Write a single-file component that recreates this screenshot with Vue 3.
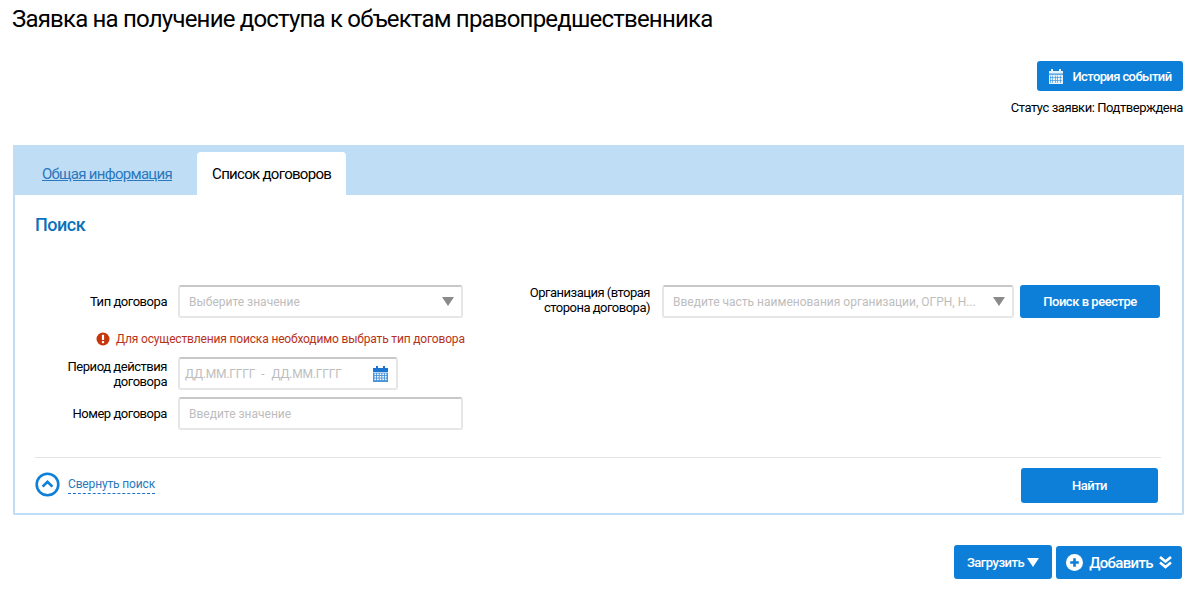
<script setup>
const calCells = [0, 1, 2, 3, 4]
</script>

<template>
  <div class="page">
    <h1 class="title">Заявка на получение доступа к объектам правопредшественника</h1>
    <div class="top-actions">
      <button class="btn history">
        <svg class="cal-white" width="14" height="15" viewBox="0 0 14 15">
          <path fill="#e8f2fb" d="M0 2h2V0h2v2h6V0h2v2h2v13H0z" />
          <g fill="#0d7fd8">
            <rect y="4.6" width="14" height="1" />
            <rect v-for="c in calCells" :key="c" :x="1 + c * 2.5" y="6.5" width="0.5" height="7.5" />
            <rect x="1" y="8.5" width="12" height="0.5" />
            <rect x="1" y="11" width="12" height="0.5" />
          </g>
        </svg>
        <span>История событий</span>
      </button>
      <div class="status">Статус заявки: Подтверждена</div>
    </div>

    <section class="panel">
      <div class="tabs">
        <a class="tab link">Общая информация</a>
        <a class="tab active">Список договоров</a>
      </div>
      <div class="body">
        <h2 class="heading">Поиск</h2>
        <div class="form">
          <div class="col-left">
            <div class="row">
              <label class="lbl">Тип договора</label>
              <div class="field wide">
                <span class="ph">Выберите значение</span>
                <i class="tri"></i>
              </div>
            </div>
            <div class="error">
              <svg width="14" height="14" viewBox="0 0 14 14">
                <circle cx="7" cy="7" r="6.5" fill="#c5360b" />
                <rect x="5.9" y="2.8" width="2.2" height="5.2" rx="0.6" fill="#fff" />
                <rect x="5.9" y="9" width="2.2" height="2.2" rx="0.6" fill="#fff" />
              </svg>
              <span>Для осуществления поиска необходимо выбрать тип договора</span>
            </div>
            <div class="row period-row">
              <label class="lbl">Период действия<br />договора</label>
              <div class="field period">
                <span class="ph date">ДД.ММ.ГГГГ</span>
                <span class="ph dash">-</span>
                <span class="ph date">ДД.ММ.ГГГГ</span>
                <svg class="cal-blue" width="15" height="16" viewBox="0 0 15 16">
                  <path fill="#1b74cf" d="M0 2h3V0h2v2h5V0h2v2h3v4H0z" />
                  <rect y="6.6" width="15" height="9.4" fill="#4a94dc" />
                  <g fill="#fff">
                    <rect v-for="c in calCells" :key="c" :x="1.5 + c * 2.6" y="7.5" width="1.6" height="1.6" />
                    <rect v-for="c in calCells" :key="'b' + c" :x="1.5 + c * 2.6" y="10" width="1.6" height="1.6" />
                    <rect v-for="c in calCells" :key="'d' + c" :x="1.5 + c * 2.6" y="12.5" width="1.6" height="1.6" />
                  </g>
                </svg>
              </div>
            </div>
            <div class="row number-row">
              <label class="lbl">Номер договора</label>
              <div class="field wide">
                <span class="ph">Введите значение</span>
              </div>
            </div>
          </div>
          <div class="col-right">
            <label class="lbl org-lbl">Организация (вторая<br />сторона договора)</label>
            <div class="field org">
              <span class="ph org-ph">Введите часть наименования организации, ОГРН, Н...</span>
              <i class="tri"></i>
            </div>
            <button class="btn registry">Поиск в реестре</button>
          </div>
        </div>
        <div class="foot">
          <a class="collapse">
            <svg width="25" height="25" viewBox="0 0 25 25">
              <circle cx="12.5" cy="12.5" r="10.8" fill="none" stroke="#0d7fd8" stroke-width="2.6" />
              <path d="M7.6 14.6l4.9-4.7 4.9 4.7" fill="none" stroke="#0d7fd8" stroke-width="2.6" />
            </svg>
            <span>Свернуть поиск</span>
          </a>
          <button class="btn find">Найти</button>
        </div>
      </div>
    </section>

    <div class="bottom-actions">
      <button class="btn upload">
        <span>Загрузить</span>
        <i class="tri white"></i>
      </button>
      <button class="btn add">
        <svg width="17" height="17" viewBox="0 0 17 17">
          <circle cx="8.5" cy="8.5" r="8.5" fill="#fff" />
          <path d="M7.2 4.2h2.6v3h3v2.6h-3v3H7.2v-3h-3V7.2h3z" fill="#0d7fd8" />
        </svg>
        <span>Добавить</span>
        <svg width="13" height="13" viewBox="0 0 13 13">
          <path d="M1 1l5.5 4.5L12 1M1 6.5l5.5 4.5L12 6.5" fill="none" stroke="#fff" stroke-width="2.6" />
        </svg>
      </button>
    </div>
  </div>
</template>

<style scoped>
.page {
  width: 1193px;
  height: 592px;
  box-sizing: border-box;
  padding: 3px 10px 0 13px;
  font-family: Roboto, "Liberation Sans", sans-serif;
  color: #000;
  overflow: hidden;
}
.title {
  margin: 0;
  font-size: 24px;
  line-height: 32px;
  font-weight: 400;
  margin-left: -1px;
  letter-spacing: -0.8px;
}
.top-actions {
  margin-top: 26px;
  display: flex;
  flex-direction: column;
  align-items: flex-end;
}
.btn {
  border: 0;
  border-radius: 3px;
  background: #0d7fd8;
  color: #fff;
  font-family: inherit;
  font-weight: 500;
  padding: 0;
  display: flex;
  align-items: center;
  justify-content: center;
}
.history {
  width: 146px;
  height: 30px;
  font-size: 13px;
  gap: 10px;
  letter-spacing: -0.6px;
}
.status {
  margin-top: 8px;
  font-size: 13px;
  line-height: 18px;
  letter-spacing: -0.44px;
}
.panel {
  margin-top: 28px;
  width: 1171px;
  box-sizing: border-box;
  border: 2px solid #c0ddf6;
  border-top: 0;
  border-radius: 2px;
}
.tabs {
  height: 50px;
  background: #c0ddf6;
  margin: 0 -2px;
  padding: 7px 0 0 14px;
  box-sizing: border-box;
  display: flex;
}
.tab {
  padding: 0 15px;
  font-size: 15px;
  line-height: 44px;
  letter-spacing: -0.7px;
  white-space: nowrap;
}
.link {
  color: #2a78bd;
  text-decoration: underline;
  padding-right: 25px;
}
.active {
  background: #fff;
  border-radius: 4px 4px 0 0;
}
.body {
  padding: 18px 21px 10px 20px;
}
.heading {
  margin: 0;
  font-size: 18px;
  line-height: 24px;
  font-weight: 500;
  color: #0a72ba;
  letter-spacing: -0.5px;
}
.form {
  margin-top: 48px;
  display: flex;
  height: 144px;
}
.col-left {
  width: 450px;
}
.row {
  display: flex;
  align-items: center;
}
.lbl {
  width: 132px;
  text-align: right;
  font-size: 13px;
  line-height: 15px;
  flex: none;
  letter-spacing: -0.46px;
}
.field {
  margin-left: 11px;
  box-sizing: border-box;
  background: #fff;
  border: 2px solid #e6e6e6;
  border-top-color: #c8c8c8;
  border-radius: 3px;
  display: flex;
  align-items: center;
  position: relative;
  height: 33px;
}
.wide {
  width: 285px;
  padding: 0 9px;
}
.ph {
  color: #bdbdbd;
  font-size: 12px;
}
.tri {
  width: 0;
  height: 0;
  border-left: 6.5px solid transparent;
  border-right: 6.5px solid transparent;
  border-top: 9px solid #8a8a8a;
  margin-left: auto;
  margin-right: -2px;
  flex: none;
}
.error {
  margin: 12px 0 0 61px;
  height: 17px;
  display: flex;
  align-items: center;
  gap: 6px;
  font-size: 12px;
  letter-spacing: -0.16px;
  color: #b8321a;
  white-space: nowrap;
}
.error svg {
  flex: none;
}
.period-row {
  margin-top: 10px;
}
.period {
  width: 220px;
  padding: 0 5px;
}
.date {
  letter-spacing: -0.2px;
  white-space: nowrap;
}
.dash {
  margin: 0 7px 0 6px;
}
.cal-blue {
  margin-left: auto;
  margin-right: 3px;
  flex: none;
}
.number-row {
  margin-top: 7px;
}
.col-right {
  margin-left: 20px;
  display: flex;
  align-items: flex-start;
}
.org-lbl {
  width: 145px;
  letter-spacing: -0.5px;
}
.org {
  width: 352px;
  margin-left: 12px;
  padding: 0 9px;
}
.org-ph {
  white-space: nowrap;
}
.registry {
  margin-left: 6px;
  width: 140px;
  height: 33px;
  font-size: 13px;
  letter-spacing: -0.47px;
  flex: none;
}
.foot {
  border-top: 1px solid #e3e3e3;
  margin-top: 28px;
  padding-top: 10px;
  height: 35px;
  display: flex;
  justify-content: space-between;
  align-items: flex-start;
}
.collapse {
  display: flex;
  align-items: center;
  gap: 8px;
  color: #2a78bd;
  font-size: 12px;
  margin-top: 4px;
  letter-spacing: -0.15px;
}
.collapse span {
  border-bottom: 1px dashed #1b74cf;
  line-height: 16px;
  padding-bottom: 1px;
  margin-top: 1px;
}
.find {
  width: 137px;
  height: 35px;
  font-size: 13px;
  margin-right: 3px;
  letter-spacing: -0.5px;
}
.bottom-actions {
  margin-top: 30px;
  display: flex;
  justify-content: flex-end;
  gap: 4px;
  align-items: flex-end;
  margin-right: 1px;
}
.upload {
  width: 98px;
  height: 34px;
  font-size: 13px;
  gap: 3px;
  letter-spacing: -0.5px;
}
.tri.white {
  border-top-color: #fff;
  border-left-width: 6px;
  border-right-width: 6px;
  margin: 0;
}
.add {
  width: 126px;
  height: 33px;
  font-size: 15px;
  gap: 6px;
  letter-spacing: -0.7px;
}
</style>
